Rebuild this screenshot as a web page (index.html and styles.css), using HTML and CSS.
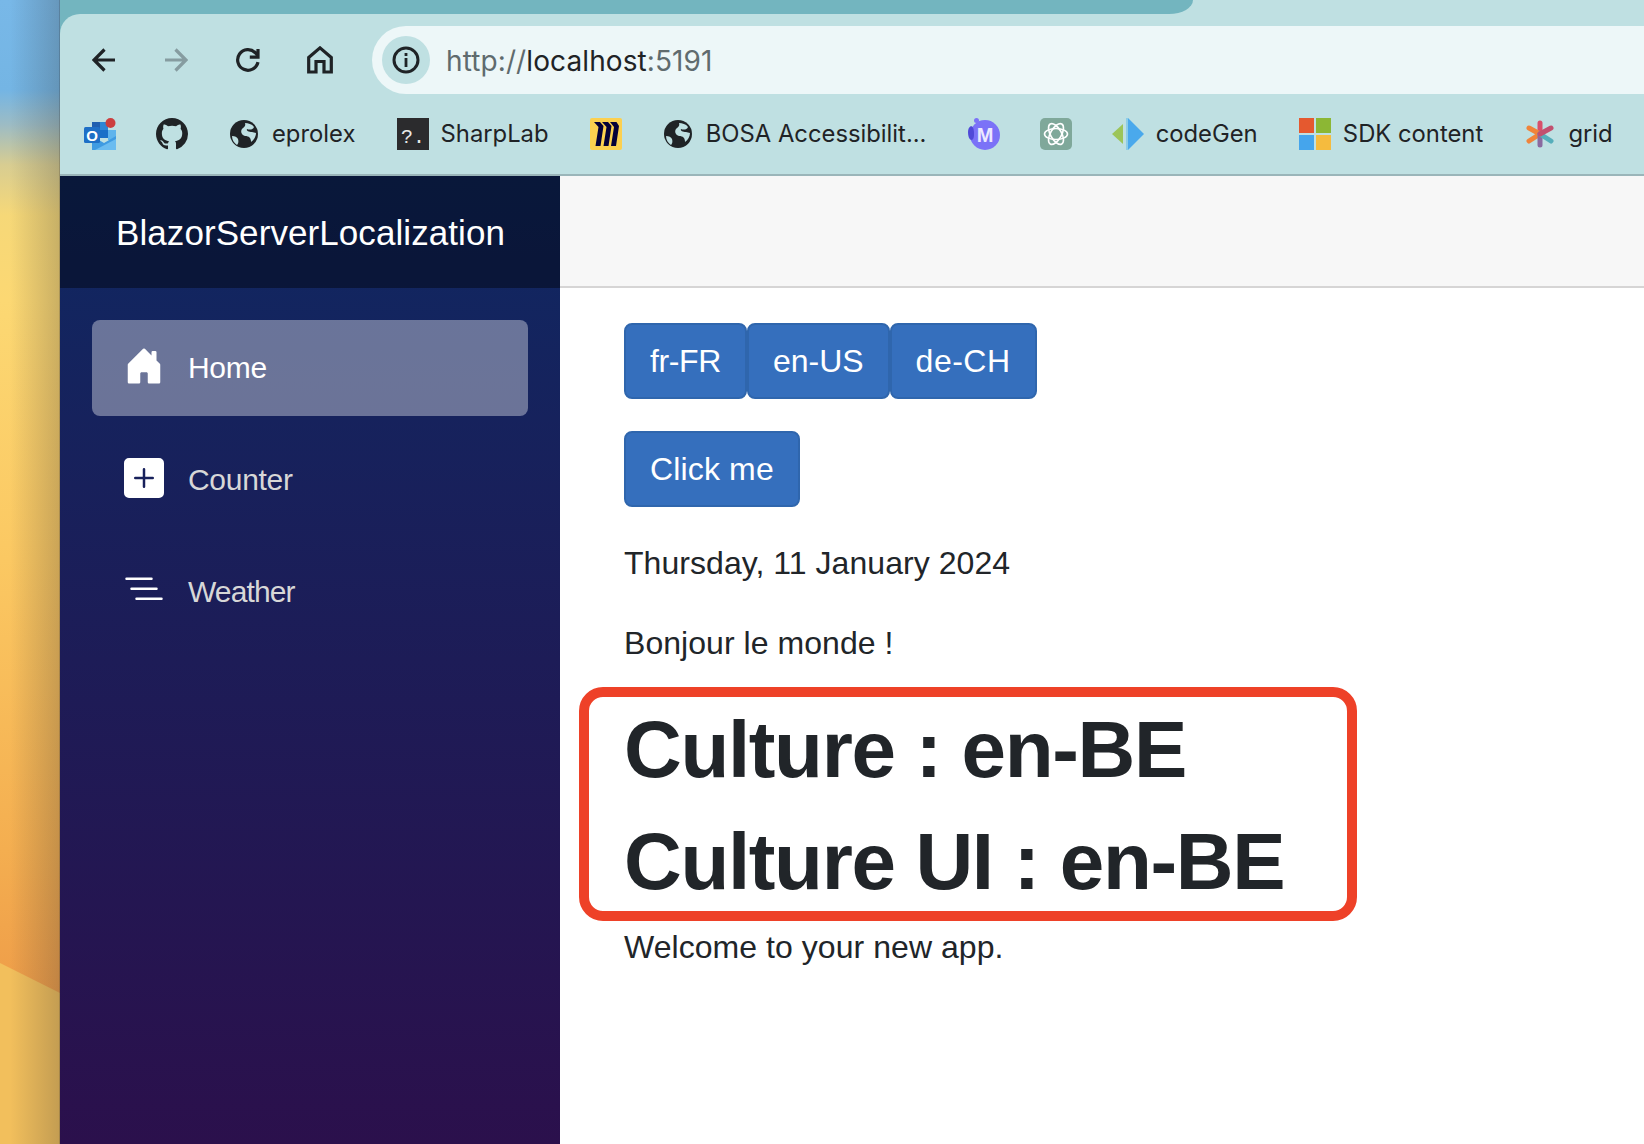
FILE: index.html
```html
<!DOCTYPE html>
<html>
<head>
    <title>BlazorServerLocalization</title>
    <link rel="stylesheet" href="styles.css">
</head>
<body>
    <div class="wallpaper"><div class="wallpaper-wedge"></div></div>
    <div class="window">
        <div class="chrome">
            <div class="tabstrip"><div class="tab"></div></div>
            <div class="toolbar">
                <div class="address-row">
                    <div class="nav-buttons">
                        <svg class="tool-icon" viewBox="0 0 24 24"><path d="M23 12H2M12.5 1.5 2 12l10.5 10.5"/></svg>
                        <svg class="tool-icon tool-icon-off" viewBox="0 0 24 24"><path d="M1 12h21M11.5 1.5 22 12 11.5 22.5"/></svg>
                        <svg class="tool-icon" viewBox="0 0 24 24"><path d="M22 14.2A10.3 10.3 0 1 1 19.4 4.8L22 7.5M22 1v8.2h-8.2"/></svg>
                        <svg class="tool-icon tool-home" viewBox="0 0 26 28"><path d="M1.7 11.5 13 1.9l11.3 9.6V26H17V15.5H9V26H1.7z"/></svg>
                    </div>
                    <div class="address-bar">
                        <span class="info-badge">
                            <svg viewBox="0 0 28 28" width="28" height="28"><circle class="info-ring" cx="14" cy="14" r="12"/><rect class="info-mark" x="12.6" y="12" width="2.8" height="9"/><rect class="info-mark" x="12.6" y="7" width="2.8" height="3"/></svg>
                        </span>
                        <span class="url">http://<span class="url-host">localhost</span>:5191</span>
                    </div>
                </div>
                <div class="bookmarks">
                    <div class="bookmark">
                        <svg class="bm-icon" viewBox="0 0 32 32"><path fill="#1f5fb0" d="M8 4h16v10H8z"/><path fill="#2f86d6" d="M16 4h8v8h-8z"/><path fill="#1a70c8" d="M16 12h8v8h-8z"/><path fill="#5fb4ec" d="M24 12h8v10h-8z"/><path fill="#3f9be2" d="M8 18l12 7 12-7v14H8z"/><path fill="#6bbcf0" d="M11 32l21-11v11z"/><rect fill="#1e6fc6" x="0" y="9" width="16" height="16" rx="1.5"/><text class="outlook-o" x="8" y="22.5" text-anchor="middle">O</text><circle fill="#cc3f3f" cx="26.5" cy="5" r="5"/></svg>
                    </div>
                    <div class="bookmark">
                        <svg class="bm-icon" viewBox="0 0 16 16"><path fill="#1f2326" d="M8 0C3.58 0 0 3.58 0 8c0 3.54 2.29 6.53 5.47 7.59.4.07.55-.17.55-.38 0-.19-.01-.82-.01-1.49-2.01.37-2.53-.49-2.69-.94-.09-.23-.48-.94-.82-1.13-.28-.15-.68-.52-.01-.53.63-.01 1.08.58 1.23.82.72 1.21 1.87.87 2.33.66.07-.52.28-.87.51-1.07-1.78-.2-3.64-.89-3.64-3.95 0-.87.31-1.59.82-2.15-.08-.2-.36-1.02.08-2.12 0 0 .67-.21 2.2.82.64-.18 1.32-.27 2-.27.68 0 1.36.09 2 .27 1.53-1.04 2.2-.82 2.2-.82.44 1.1.16 1.92.08 2.12.51.56.82 1.27.82 2.15 0 3.07-1.87 3.75-3.65 3.95.29.25.54.73.54 1.48 0 1.07-.01 1.93-.01 2.2 0 .21.15.46.55.38A8.013 8.013 0 0016 8c0-4.42-3.58-8-8-8z"/></svg>
                    </div>
                    <div class="bookmark">
                        <svg class="bm-icon" viewBox="-2 -2 32 32"><circle fill="#1f2326" cx="14" cy="14" r="14"/><path fill="#bfe0e2" d="M15 3c3 0 7 1 9 4-1 3-5 3-7 2-1 2 2 3 5 3l4 1c0 3-2 7-5 9 0-4-2-6-6-6-3-1-5-4-3-7 2-2 4-3 3-6zM2 16c3 0 5 1 6 3 1 3 0 5-1 6-3-2-5-5-5-9z"/></svg>
                        <span class="bm-label">eprolex</span>
                    </div>
                    <div class="bookmark">
                        <svg class="bm-icon" viewBox="0 0 32 32"><rect fill="#2b2b2d" width="32" height="32"/><text class="sharp-mark" x="4" y="25">?.</text></svg>
                        <span class="bm-label">SharpLab</span>
                    </div>
                    <div class="bookmark">
                        <svg class="bm-icon" viewBox="0 0 32 32"><rect fill="#fcd04f" width="32" height="32" rx="2"/><path fill="#050038" d="M4 4h6l3.5 4-3 20H5.5L8.5 9zM12 4h6l3.5 4-3 20h-5l3-19zM20 4h6.5L29 8l-3 20h-5l3-19z"/></svg>
                    </div>
                    <div class="bookmark">
                        <svg class="bm-icon" viewBox="-2 -2 32 32"><circle fill="#1f2326" cx="14" cy="14" r="14"/><path fill="#bfe0e2" d="M15 3c3 0 7 1 9 4-1 3-5 3-7 2-1 2 2 3 5 3l4 1c0 3-2 7-5 9 0-4-2-6-6-6-3-1-5-4-3-7 2-2 4-3 3-6zM2 16c3 0 5 1 6 3 1 3 0 5-1 6-3-2-5-5-5-9z"/></svg>
                        <span class="bm-label">BOSA Accessibilit...</span>
                    </div>
                    <div class="bookmark">
                        <svg class="bm-icon" viewBox="0 0 32 32"><circle fill="#7b72f7" cx="8.5" cy="2.5" r="2.5"/><ellipse fill="#7b72f7" cx="17" cy="17" rx="15" ry="15"/><path fill="#4f49d8" d="M0 14c0-3 1-5 3-6 3 1 3 5 3 9 0 3-1 5-3 5-2-1-3-4-3-8z"/><text class="m-mark" x="17" y="24" text-anchor="middle">M</text></svg>
                    </div>
                    <div class="bookmark">
                        <svg class="bm-icon" viewBox="0 0 32 32"><rect fill="#7fa89a" width="32" height="32" rx="5"/><g class="gpt-rings"><ellipse cx="16" cy="16" rx="11.5" ry="5.5"/><ellipse cx="16" cy="16" rx="11.5" ry="5.5" transform="rotate(60 16 16)"/><ellipse cx="16" cy="16" rx="11.5" ry="5.5" transform="rotate(120 16 16)"/></g></svg>
                    </div>
                    <div class="bookmark">
                        <svg class="bm-icon" viewBox="0 0 32 32"><path fill="#9cc55a" d="M0 16 11 6v20z"/><path fill="#4aa9ec" d="M16 0l16 16-16 16z"/><path fill="#8ccde8" d="M14 0h2v32h-2z"/></svg>
                        <span class="bm-label">codeGen</span>
                    </div>
                    <div class="bookmark">
                        <svg class="bm-icon" viewBox="0 0 32 32"><rect fill="#e5592f" width="15" height="15"/><rect fill="#8cb734" x="17" width="15" height="15"/><rect fill="#45a5ec" y="17" width="15" height="15"/><rect fill="#f5bb3e" x="17" y="17" width="15" height="15"/></svg>
                        <span class="bm-label">SDK content</span>
                    </div>
                    <div class="bookmark">
                        <svg class="bm-icon" viewBox="-2 -2 32 32"><g class="grid-arms"><path stroke="#d8506a" d="M14 3v10"/><path stroke="#f0843a" d="M3 8l11 6"/><path stroke="#f0843a" d="M3 21l11-7"/><path stroke="#8a6aa0" d="M14 25V14"/><path stroke="#55aebb" d="M25 21l-11-7"/><path stroke="#c2506f" d="M25 8l-11 6"/></g></svg>
                        <span class="bm-label">grid</span>
                    </div>
                </div>
            </div>
        </div>
        <div class="app">
            <div class="sidebar">
                <div class="brand">BlazorServerLocalization</div>
                <nav class="side-nav">
                    <a class="side-link active" href="#">
                        <svg class="side-icon" viewBox="0 0 16 16"><path d="M6.5 14.5v-3.505c0-.245.25-.495.5-.495h2c.25 0 .5.25.5.5v3.5a.5.5 0 0 0 .5.5h4a.5.5 0 0 0 .5-.5v-7a.5.5 0 0 0-.146-.354L13 5.793V2.5a.5.5 0 0 0-.5-.5h-1a.5.5 0 0 0-.5.5v1.293L8.354 1.146a.5.5 0 0 0-.708 0l-6 6A.5.5 0 0 0 1.5 7.5v7a.5.5 0 0 0 .5.5h4a.5.5 0 0 0 .5-.5z"/></svg>
                        Home
                    </a>
                    <a class="side-link" href="#">
                        <svg class="side-icon" viewBox="0 0 16 16"><path d="M2 0a2 2 0 0 0-2 2v12a2 2 0 0 0 2 2h12a2 2 0 0 0 2-2V2a2 2 0 0 0-2-2H2zm6.5 4.5v3h3a.5.5 0 0 1 0 1h-3v3a.5.5 0 0 1-1 0v-3h-3a.5.5 0 0 1 0-1h3v-3a.5.5 0 0 1 1 0z"/></svg>
                        Counter
                    </a>
                    <a class="side-link side-link-tight" href="#">
                        <svg class="side-icon" viewBox="0 0 16 16"><path d="M4.5 11.5A.5.5 0 0 1 5 11h10a.5.5 0 0 1 0 1H5a.5.5 0 0 1-.5-.5zm-2-4A.5.5 0 0 1 3 7h10a.5.5 0 0 1 0 1H3a.5.5 0 0 1-.5-.5zm-2-4A.5.5 0 0 1 1 3h10a.5.5 0 0 1 0 1H1a.5.5 0 0 1-.5-.5z"/></svg>
                        Weather
                    </a>
                </nav>
            </div>
            <div class="main">
                <div class="top-row"></div>
                <div class="content">
                    <div class="button-row">
                        <button class="btn btn-tight">fr-FR</button>
                        <button class="btn">en-US</button>
                        <button class="btn btn-wide">de-CH</button>
                    </div>
                    <div class="button-row">
                        <button class="btn btn-click">Click me</button>
                    </div>
                    <p>Thursday, 11 January 2024</p>
                    <p>Bonjour le monde !</p>
                    <div class="cultures">
                        <h1>Culture : en-BE</h1>
                        <h1>Culture UI : en-BE</h1>
                        <div class="callout"></div>
                    </div>
                    <p>Welcome to your new app.</p>
                </div>
            </div>
        </div>
    </div>
</body>
</html>
```
FILE: styles.css
```css
html, body {
    height: 100%;
}
body {
    margin: 0;
    display: flex;
    height: 1144px;
    overflow: hidden;
    font-family: "Liberation Sans", Arial, sans-serif;
    font-size: 32px;
    line-height: 48px;
    color: #212529;
    background-color: white;
}

/* desktop strip on the left */
.wallpaper {
    position: relative;
    flex: 0 0 60px;
    background: linear-gradient(180deg, #78b8e8 0, #74b5e4 90px, #9dbcc4 125px, #d8cd91 165px, #f6d878 215px, #fcd873 300px, #fbc862 560px, #f4ae50 850px, #ee9c48 1000px);
}
.wallpaper-wedge {
    position: absolute;
    inset: 0;
    background-color: #f2bf5c;
    clip-path: polygon(0 963px, 60px 993px, 60px 1144px, 0 1144px);
}
.wallpaper::after {
    content: "";
    position: absolute;
    inset: 0;
    background: linear-gradient(90deg, rgba(50, 50, 50, 0) 10px, rgba(50, 50, 50, 0.24) 59px, rgba(40, 40, 40, 0.55) 60px);
}

.window {
    flex: 1;
    display: flex;
    flex-direction: column;
    min-width: 0;
}

/* browser chrome */
.chrome {
    background: linear-gradient(90deg, #73b5bf 100px, #bfe0e2 100px);
}
.tabstrip {
    height: 14px;
    background-color: #bfe0e2;
}
.tab {
    width: 1133px;
    height: 14px;
    background-color: #73b5bf;
    border-bottom-right-radius: 24px 14px;
}
.toolbar {
    background-color: #bfe0e2;
    border-top-left-radius: 20px;
    border-bottom: 2px solid #9ab5b9;
}
.address-row {
    display: flex;
    align-items: center;
    height: 68px;
    padding: 12px 0 0 32px;
}
.nav-buttons {
    display: flex;
    align-items: center;
    gap: 48px;
    margin-right: 40px;
}
.tool-icon {
    width: 24px;
    height: 24px;
    fill: none;
    stroke: #1f2326;
    stroke-width: 3.2;
}
.tool-icon-off {
    stroke: #869ca0;
}
.tool-home {
    width: 26px;
    height: 28px;
    margin: 0 -1px;
}
.address-bar {
    flex: 1;
    display: flex;
    align-items: center;
    gap: 16px;
    height: 68px;
    padding-left: 10px;
    background-color: #edf7f8;
    border-radius: 34px 0 0 34px;
}
.info-badge {
    display: flex;
    align-items: center;
    justify-content: center;
    width: 48px;
    height: 48px;
    border-radius: 50%;
    background-color: #bfe0e2;
}
.info-ring {
    fill: none;
    stroke: #1f2326;
    stroke-width: 3;
}
.info-mark {
    fill: #1f2326;
}
.url {
    padding-top: 2px;
    font-family: Inter, sans-serif;
    font-size: 28px;
    letter-spacing: 0.1px;
    color: #5f6b6e;
}
.url-host {
    color: #1f2326;
}
.bookmarks {
    display: flex;
    align-items: center;
    gap: 40px;
    height: 80px;
    padding-left: 24px;
    white-space: nowrap;
}
.bookmark {
    display: flex;
    align-items: center;
    gap: 12px;
}
.bm-icon {
    display: block;
    width: 32px;
    height: 32px;
}
.bm-label {
    margin-right: 1.2px;
    font-family: Inter, sans-serif;
    font-size: 23.8px;
    line-height: 32px;
    color: #1f2326;
}
.outlook-o {
    font: bold 15px "Liberation Sans", sans-serif;
    fill: white;
}
.sharp-mark {
    font: 20px "Liberation Mono", monospace;
    fill: #e8e8e8;
}
.m-mark {
    font: bold 20px "Liberation Sans", sans-serif;
    fill: #ece9ff;
}
.gpt-rings {
    fill: none;
    stroke: white;
    stroke-width: 1.6;
}
.grid-arms {
    fill: none;
    stroke-width: 5;
    stroke-linecap: round;
}

/* app */
.app {
    flex: 1;
    display: flex;
    min-height: 0;
}
.sidebar {
    flex: 0 0 500px;
    background: linear-gradient(180deg, #0f2862 0, #2b104c 100%);
}
.brand {
    height: 112px;
    padding-left: 56px;
    font-size: 35px;
    line-height: 114px;
    letter-spacing: 0.08px;
    color: white;
    background-color: rgba(0, 0, 0, 0.4);
}
.side-nav {
    display: flex;
    flex-direction: column;
    gap: 16px;
    padding: 32px;
}
.side-link {
    display: flex;
    align-items: center;
    gap: 24px;
    height: 96px;
    padding-left: 32px;
    border-radius: 8px;
    font-size: 30px;
    letter-spacing: -0.3px;
    color: #d7d7d7;
    text-decoration: none;
}
.side-link.active {
    color: white;
    background-color: rgba(255, 255, 255, 0.37);
}
.side-link-tight {
    letter-spacing: -0.9px;
}
.side-icon {
    width: 40px;
    height: 40px;
    margin-bottom: 4px;
    fill: white;
}

.main {
    flex: 1;
    min-width: 0;
}
.top-row {
    height: 110px;
    background-color: #f7f7f7;
    border-bottom: 2px solid #d6d5d5;
}
.content {
    padding: 35px 0 0 64px;
}
.button-row {
    display: flex;
    margin-bottom: 32px;
}
.btn {
    height: 76px;
    padding: 12px 24px;
    font-family: inherit;
    font-size: 32px;
    line-height: 48px;
    color: white;
    background-color: #356fbd;
    border: 2px solid #2f66ad;
    border-radius: 8px;
}
.btn-tight {
    letter-spacing: -0.4px;
}
.btn-wide {
    letter-spacing: 0.5px;
}
.btn-click {
    letter-spacing: 0.15px;
}
p {
    margin: 0 0 32px;
    letter-spacing: 0.05px;
}
.cultures {
    position: relative;
}
h1 {
    margin: 0 0 13px;
    padding-top: 3px;
    font-size: 80px;
    line-height: 96px;
    font-weight: 700;
    letter-spacing: -1.35px;
}
.callout {
    position: absolute;
    top: -12px;
    left: -45px;
    width: 778px;
    height: 234px;
    box-sizing: border-box;
    border: 10px solid #ee4128;
    border-radius: 24px;
}
```
